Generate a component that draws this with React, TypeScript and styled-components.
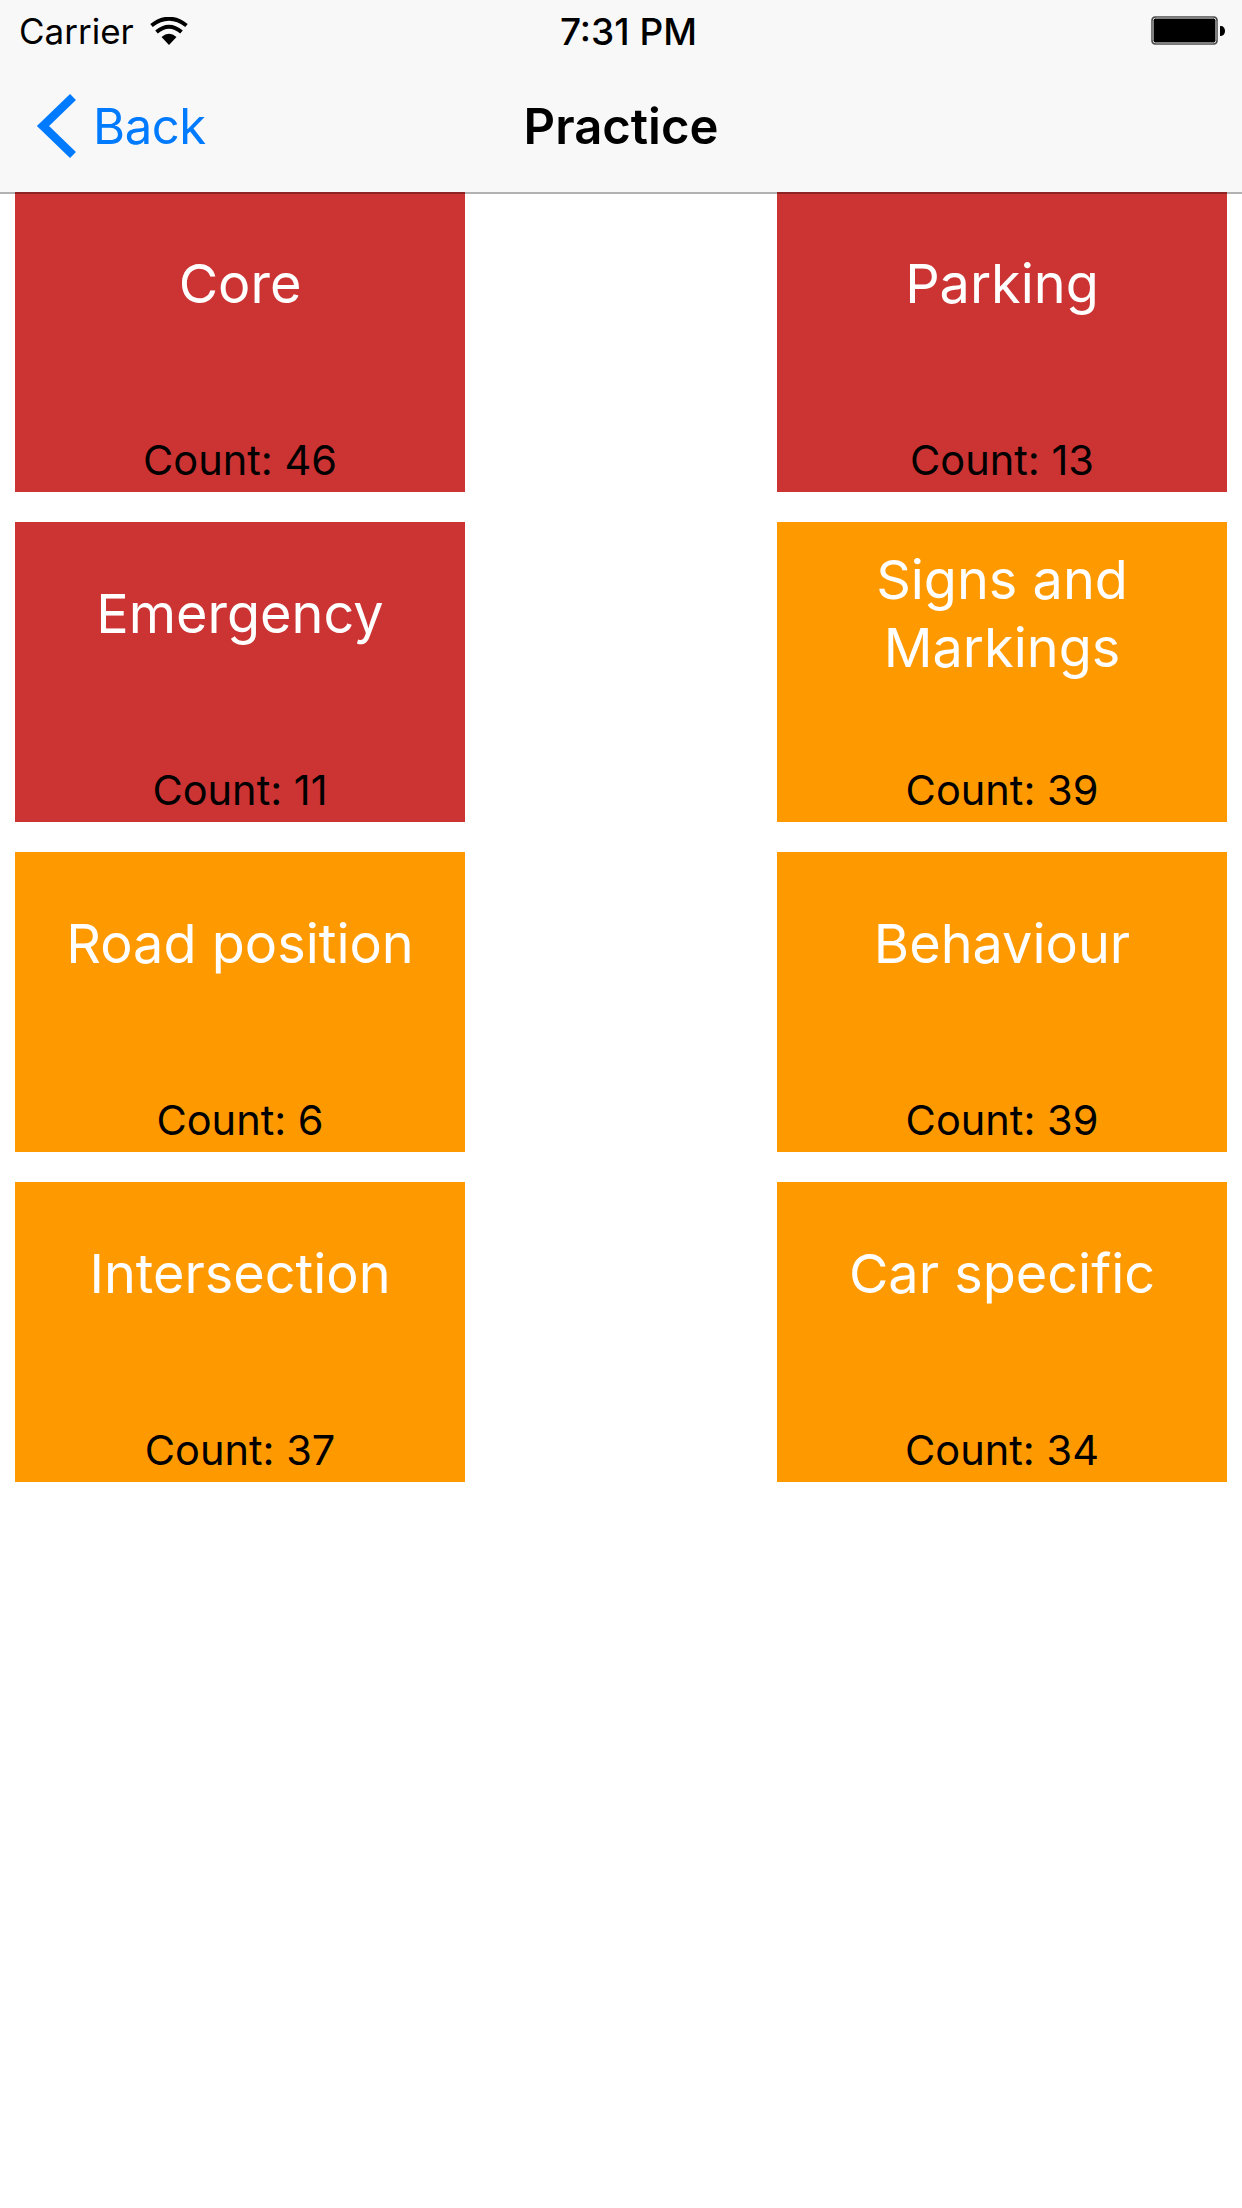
import React from 'react'
import styled, { createGlobalStyle } from 'styled-components'

const Global = createGlobalStyle`
  html, body {
    margin: 0;
    padding: 0;
    background: #fff;
    font-family: Inter, 'Liberation Sans', sans-serif;
  }
`

const Page = styled.div`
  width: 1242px;
  height: 2208px;
  background: #fff;
  overflow: hidden;
`

const Header = styled.header`
  position: relative;
  z-index: 1;
  height: 192px;
  background: #f8f8f8;

  &::after {
    content: '';
    position: absolute;
    left: 0;
    right: 0;
    bottom: -2px;
    height: 2px;
    background: rgba(0, 0, 0, 0.3);
  }
`

const StatusBar = styled.div`
  display: grid;
  grid-template-columns: 1fr auto 1fr;
  align-items: center;
  height: 62px;
  padding: 0 17px 0 19px;
  font-size: 35px;
  color: #000;
`

const Carrier = styled.div`
  display: flex;
  align-items: center;
  gap: 16px;
`

const Clock = styled.div`
  margin-left: 13px;
  font-weight: 500;
  font-size: 37px;
`

const Battery = styled.div`
  justify-self: end;
  display: flex;
`

const NavBar = styled.div`
  display: grid;
  grid-template-columns: 1fr auto 1fr;
  align-items: center;
  height: 128px;
  padding: 0 36px;
`

const BackLink = styled.a`
  display: flex;
  align-items: center;
  gap: 14px;
  color: #007aff;
  font-size: 49px;
  letter-spacing: -0.4px;
`

const Title = styled.h1`
  margin: 0;
  font-size: 49px;
  font-weight: 600;
  color: #000;
`

const Grid = styled.main`
  display: grid;
  grid-template-columns: 450px 450px;
  justify-content: space-between;
  row-gap: 30px;
  padding: 0 15px;
`

const Tile = styled.div<{ $tone: 'red' | 'orange' }>`
  display: flex;
  flex-direction: column;
  height: 300px;
  background: ${p => (p.$tone === 'red' ? '#cc3333' : '#ff9900')};
  text-align: center;
`

const TileName = styled.div`
  display: flex;
  align-items: center;
  justify-content: center;
  height: 183px;
  padding: 0 20px;
  font-size: 54px;
  line-height: 68px;
  color: #fff;
`

const TileCount = styled.div`
  margin-top: auto;
  height: 62px;
  line-height: 60px;
  font-size: 41.5px;
  color: #000;
`

const WifiIcon = () => (
  <svg width="38" height="28" viewBox="0 0 38 28">
    <path d="M19 28 L11.5 20 Q19 13.5 26.5 20 Z" fill="#000" />
    <path d="M6.5 15 Q19 4.5 31.5 15" fill="none" stroke="#000" strokeWidth="4" />
    <path d="M1.5 8.5 Q19 -5 36.5 8.5" fill="none" stroke="#000" strokeWidth="4" />
  </svg>
)

const BatteryIcon = () => (
  <svg width="74" height="30" viewBox="0 0 74 30">
    <rect x="0.5" y="0.5" width="66" height="28" rx="4" fill="#000" stroke="#777" strokeWidth="1" />
    <rect x="2" y="2" width="63" height="25" rx="2.5" fill="#000" stroke="#fff" strokeWidth="1" />
    <path d="M69 10 H70 A4 5 0 0 1 70 20 H69 Z" fill="#000" />
  </svg>
)

const Chevron = () => (
  <svg width="43" height="66" viewBox="0 0 43 66">
    <path d="M37 4 L7 33 L37 62" fill="none" stroke="#007aff" strokeWidth="8.5" />
  </svg>
)

const topics: { name: string; count: number; tone: 'red' | 'orange' }[] = [
  { name: 'Core', count: 46, tone: 'red' },
  { name: 'Parking', count: 13, tone: 'red' },
  { name: 'Emergency', count: 11, tone: 'red' },
  { name: 'Signs and Markings', count: 39, tone: 'orange' },
  { name: 'Road position', count: 6, tone: 'orange' },
  { name: 'Behaviour', count: 39, tone: 'orange' },
  { name: 'Intersection', count: 37, tone: 'orange' },
  { name: 'Car specific', count: 34, tone: 'orange' },
]

export default function App() {
  return (
    <Page>
      <Global />
      <Header>
        <StatusBar>
          <Carrier>
            Carrier
            <WifiIcon />
          </Carrier>
          <Clock>7:31 PM</Clock>
          <Battery>
            <BatteryIcon />
          </Battery>
        </StatusBar>
        <NavBar>
          <BackLink>
            <Chevron />
            Back
          </BackLink>
          <Title>Practice</Title>
        </NavBar>
      </Header>
      <Grid>
        {topics.map(t => (
          <Tile key={t.name} $tone={t.tone}>
            <TileName>{t.name}</TileName>
            <TileCount>Count: {t.count}</TileCount>
          </Tile>
        ))}
      </Grid>
    </Page>
  )
}
